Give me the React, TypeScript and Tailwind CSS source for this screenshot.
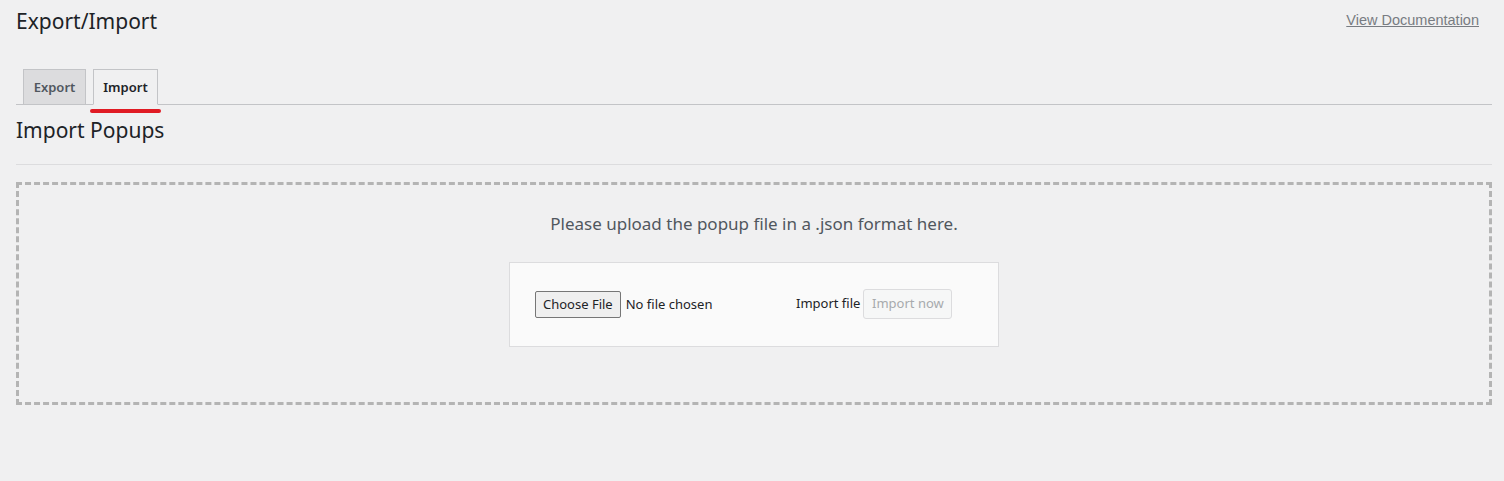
import React from "react";

export default function App() {
  const font = { fontFamily: '"Noto Sans", "Open Sans", sans-serif' };
  return (
    <div className="min-h-[481px] w-full bg-[#f0f0f1] pl-4 pr-3 text-[#1d2327]" style={font}>
      <div className="flex items-start justify-between">
        <h1 className="pt-[6px] text-[21px] leading-[30px] font-normal text-[#1d2327]">Export/Import</h1>
        <a
          href="#"
          className="mr-[13px] mt-[10px] text-[14.5px] leading-[20px] text-[#787c82] underline"
          style={{ fontFamily: '"Liberation Sans", Arial, sans-serif' }}
        >
          View Documentation
        </a>
      </div>

      <div className="relative mt-[33px] flex gap-[7px] border-b border-[#c3c4c7] pl-[7px]">
        <div className="mb-[-1px] flex h-[36px] w-[63px] items-center justify-center border border-[#c3c4c7] bg-[#dcdcde] pt-[1px] text-[13px] font-semibold text-[#50575e]">
          Export
        </div>
        <div className="mb-[-1px] flex h-[36px] w-[65px] items-center justify-center border border-[#c3c4c7] border-b-[#f0f0f1] bg-[#f0f0f1] pt-[1px] text-[13px] font-semibold text-[#1d2327]">
          Import
        </div>
        <div className="absolute left-[74px] top-[40px] h-[3.5px] w-[71px] rounded-full bg-[#e01b24]" />
      </div>

      <h2 className="mt-[11px] text-[21px] leading-[28px] font-normal text-[#1d2327]">Import Popups</h2>

      <div className="mt-[20px] h-px bg-[#dcdcde]" />

      <div className="mt-[17px] flex h-[223px] flex-col items-center border-[3px] border-dashed border-[#b4b4b4]">
        <p className="mt-[27px] text-[17px] leading-[24px] text-[#50575e]">
          Please upload the popup file in a .json format here.
        </p>
        <div className="mt-[26px] flex h-[85px] w-[490px] items-center border border-[#dcdcde] bg-[#fafafa] pl-[25px]">
          <div className="flex w-[261px] items-center">
            <span className="flex h-[27px] items-center rounded-[2px] border border-[#767676] bg-[#efefef] px-[7px] text-[13px] text-[#1d2327]">
              Choose File
            </span>
            <span className="ml-[5px] text-[13px] text-[#1d2327]">No file chosen</span>
          </div>
          <span className="mt-[-2px] text-[13px] text-[#1d2327]">Import file</span>
          <span className="ml-[3px] mt-[-2px] flex h-[30px] w-[89px] items-center justify-center rounded-[3px] border border-[#dcdcde] bg-[#f6f7f7] text-[13px] text-[#a7aaad]">
            Import now
          </span>
        </div>
      </div>
    </div>
  );
}
